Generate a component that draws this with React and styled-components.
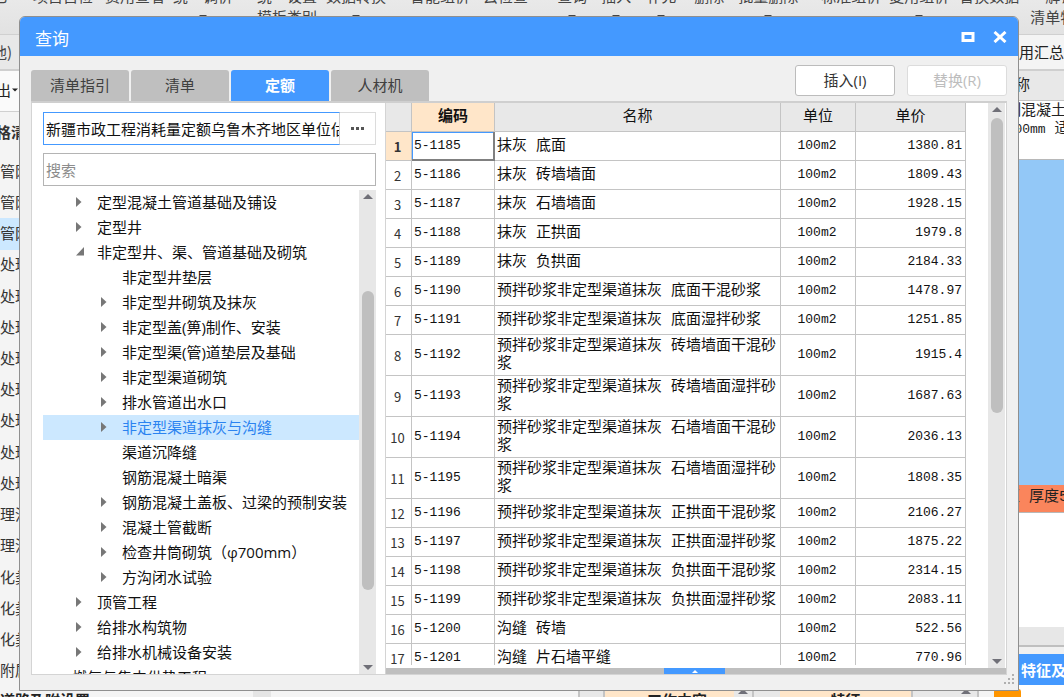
import React from "react";
import styled, { createGlobalStyle, css } from "styled-components";

const uiFont = '"Open Sans", "Noto Sans CJK SC", sans-serif';
const cjkFont = '"Noto Sans CJK SC", sans-serif';
const gridFont = '"Liberation Mono", "Noto Sans CJK SC", monospace';

const GlobalStyle = createGlobalStyle`
  * { box-sizing: border-box; }
  body { margin: 0; overflow: hidden; font-family: ${cjkFont}; font-size: 15px; color: #222; }
  button, input { font: inherit; }
`;

/* ---------- main window behind the dialog ---------- */

const Shell = styled.div`
  position: relative;
  height: 100vh;
  display: flex;
  flex-direction: column;
  overflow: hidden;
  background: #f4f4f4;
  white-space: nowrap;
`;

const Toolbar = styled.div`
  flex: 0 0 35px;
  display: flex;
  align-items: flex-end;
  padding-bottom: 7px;
  overflow: hidden;
  background: linear-gradient(#e9e9e9, #e2e2e2);
  border-bottom: 1px solid #d0d0d0;
  color: #444;
`;

const Tool = styled.button`
  flex: none;
  height: 42px;
  margin: 0 0 0 ${(p) => p.$gap}px;
  padding: 0;
  border: 0;
  background: none;
  color: inherit;
  display: grid;
  grid-template-rows: 21px 21px;
  place-items: center;
  line-height: 21px;
`;

const SubBar = styled.div`
  flex: 0 0 35px;
  display: flex;
  border-bottom: 2px solid #cfcfcf;
  background: #e8e8e8;
  line-height: 34px;
`;

const SubLeft = styled.div`
  flex: 1;
  text-indent: -8px;
  color: #444;
`;

const SubRight = styled.div`
  flex: 0 0 80px;
  padding-left: 20px;
  background: #f4f4f4;
  overflow: hidden;
`;

const Work = styled.div`
  flex: 1;
  min-height: 0;
  display: flex;
`;

const Side = styled.div`
  flex: 0 0 253px;
  display: flex;
  flex-direction: column;
  padding-bottom: 2px;
  background: #f4f4f4;
`;

const ExportBar = styled.div`
  flex: 0 0 41px;
  display: flex;
  align-items: center;
  gap: 1px;
  padding-bottom: 3px;
  background: #fafafa;
  border-bottom: 1px solid #d0d0d0;
  text-indent: -4px;
`;

const SideTitle = styled.div`
  flex: 0 0 44px;
  line-height: 40px;
  font-weight: bold;
  color: #333;
  text-indent: -4px;
`;

const SideItem = styled.div`
  flex: 1;
  display: flex;
  align-items: center;
  padding-bottom: 3px;
  color: #333;
  background: ${(p) => (p.$active ? "#cce8ff" : "transparent")};
`;

const Middle = styled.div`
  flex: 1;
  background: #f4f4f4;
`;

const Details = styled.div`
  flex: 0 0 80px;
  display: flex;
  flex-direction: column;
  overflow: hidden;
  background: #fff;
`;

const DetailHead = styled.div`
  flex: 0 0 30px;
  line-height: 26px;
  padding-left: 16px;
  background: #e8e8e8;
  border-bottom: 1px solid #c4c4c4;
`;

const DetailCell = styled.div`
  flex: 0 0 59px;
  padding: 2px 0 0 7px;
  line-height: 18px;
  font-family: ${gridFont};
  border-bottom: 1px solid #b8b8b8;
  small { font-size: 13px; }
`;

const BlueBlock = styled.div`
  flex: 1;
  background: #93c8f7;
`;

const OrangeBlock = styled.div`
  flex: 0 0 28px;
  line-height: 26px;
  padding-left: 6px;
  background: #fa855c;
  border-bottom: 1px solid #b8b8b8;
  font-family: ${gridFont};
`;

const Blank = styled.div`
  flex: 0 0 114px;
`;

const DetailScroll = styled.div`
  flex: 0 0 27px;
  background: linear-gradient(#e7e7e7 18px, #bfbfbf 18px, #bfbfbf 20px, #f0f0f0 20px);
`;

const DetailTab = styled.div`
  flex: 0 0 31px;
  line-height: 31px;
  padding-left: 37px;
  background: #4499ff;
  color: #fff;
  font-weight: bold;
`;

const DetailEnd = styled.div`
  flex: 0 0 4px;
`;

const BottomRow = styled.div`
  flex: 0 0 8px;
  display: flex;
  overflow: hidden;
  line-height: 22px;
  color: #222;
`;

const BottomCell = styled.div`
  flex: ${(p) => (p.$w ? `0 0 ${p.$w}px` : "1")};
  text-align: ${(p) => (p.$start ? "left" : "center")};
  background: ${(p) => p.$bg || "#f4f4f4"};
  border-right: ${(p) => (p.$line ? "2px solid #c4c4c4" : "0")};
  border-radius: ${(p) => (p.$round ? "3px 3px 0 0" : "0")};
  font-weight: bold;
  svg { display: block; margin: 0 auto; color: #707078; }
`;

/* ---------- dialog ---------- */

const Dialog = styled.section`
  position: absolute;
  inset: 16px 45px 6px 19px;
  display: flex;
  flex-direction: column;
  background: #f0f0f0;
  border: 1px solid #8f8f8f;
  border-radius: 6px 6px 0 0;
  overflow: hidden;
`;

const TitleBar = styled.header`
  flex: 0 0 39px;
  display: flex;
  align-items: center;
  padding: 0 11px 0 15px;
  background: #4499ff;
  color: #fff;
`;

const Title = styled.h1`
  flex: 1;
  margin: 0;
  padding-top: 2px;
  font-size: 17px;
  line-height: 24px;
  font-weight: normal;
`;

const WinButton = styled.button`
  display: flex;
  padding: 0;
  margin-left: 18px;
  border: 0;
  background: none;
  color: #fff;
`;

const Bar = styled.div`
  flex: 0 0 45px;
  display: flex;
  align-items: flex-end;
  padding: 0 11px;
`;

const Tabs = styled.div`
  flex: 1;
  display: flex;
  gap: 2px;
`;

const Tab = styled.button`
  width: 98px;
  height: 31px;
  padding: 0 0 2px;
  border: 0;
  border-radius: 3px 3px 0 0;
  background: ${(p) => (p.$active ? "#4499ff" : "#bfbfbf")};
  color: ${(p) => (p.$active ? "#fff" : "#404040")};
  font-weight: ${(p) => (p.$active ? "bold" : "normal")};
`;

const Actions = styled.div`
  display: flex;
  gap: 12px;
  padding-bottom: 5px;
`;

const Action = styled.button`
  width: 100px;
  height: 31px;
  padding: 0 0 2px;
  border: 1px solid #bcbcbc;
  border-radius: 3px;
  background: #fff;
  color: #333;
  font-family: ${uiFont};
  &:disabled { border-color: #dcdcdc; color: #bdbdbd; }
`;

const Panel = styled.div`
  flex: 1;
  min-height: 0;
  display: flex;
  margin: 0 11px 15px;
  border: 1px solid #d4d4d4;
  border-top: 2px solid #cfcfcf;
`;

const Left = styled.div`
  flex: 0 0 354px;
  display: flex;
  flex-direction: column;
  padding: 9px 9px 0 11px;
  background: #fff;
  border-right: 1px solid #d4d4d4;
`;

const Picker = styled.div`
  flex: 0 0 33px;
  display: flex;
  margin-bottom: 8px;
`;

const PickerInput = styled.input`
  flex: 1;
  min-width: 0;
  padding: 0 0 0 2px;
  border: 1px solid #4499ff;
  border-right-color: #d0d0d0;
  border-radius: 0;
  color: #111;
  outline: none;
`;

const PickerButton = styled.button`
  width: 36px;
  padding: 0;
  border: 1px solid #dcdcdc;
  border-left: 0;
  background: #fff;
  color: #555;
  display: grid;
  place-items: center;
`;

const Search = styled.input`
  flex: 0 0 33px;
  min-width: 0;
  margin-bottom: 4px;
  padding: 0 2px;
  border: 1px solid #b4b4b4;
  border-radius: 0;
  outline: none;
  &::placeholder { color: #8c8c8c; opacity: 1; }
`;

const TreeArea = styled.div`
  flex: 1;
  min-height: 0;
  display: flex;
`;

const Tree = styled.ul`
  flex: 1;
  margin: 0;
  padding: 0;
  list-style: none;
  overflow: hidden;
  font-family: ${uiFont};
`;

const Node = styled.li`
  display: flex;
  align-items: center;
  height: 25px;
  line-height: 22px;
  padding: 0 0 2px ${(p) => 8 + p.$level * 25}px;
  background: ${(p) => (p.$active ? "#cce8ff" : "transparent")};
  color: ${(p) => (p.$active ? "#2b83f0" : "#111")};
`;

const Twist = styled.span`
  flex: 0 0 21px;
  display: flex;
`;

const Track = styled.div`
  flex: 0 0 17px;
  display: flex;
  flex-direction: column;
  align-items: center;
  padding: 4px 0;
  background: #e7e7e7;
  color: #707078;
`;

const Spacer = styled.div`
  flex: ${(p) => p.$grow} 0 0;
`;

const Thumb = styled.div`
  flex: ${(p) => p.$grow} 0 0;
  width: 12px;
  border-radius: 6px;
  background: #bfbfbf;
`;

const Right = styled.div`
  flex: 1;
  min-width: 0;
  display: flex;
  flex-direction: column;
  background: #fff;
`;

const GridArea = styled.div`
  flex: 1;
  min-height: 0;
  display: flex;
  padding-right: 1px;
`;

const GridView = styled.div`
  flex: 1;
  min-width: 0;
  overflow: hidden;
  margin-bottom: 3px;
  padding-right: 22px;
`;

const Table = styled.table`
  width: 100%;
  table-layout: fixed;
  border-collapse: separate;
  border-spacing: 0;
  font-family: ${gridFont};
  color: #111;
`;

const cell = css`
  border-right: 1px solid #c4c4c4;
  border-bottom: 1px solid #c4c4c4;
`;

const Th = styled.th`
  ${cell}
  height: 29px;
  padding: 2px 0 0;
  line-height: 24px;
  background: ${(p) => (p.$active ? "#ffe6c9" : "#e8e8e8")};
  font-weight: ${(p) => (p.$active ? "bold" : "normal")};
`;

const RowNo = styled.th`
  ${cell}
  padding: 1px 2px 0 0;
  font-family: ${cjkFont};
  font-size: 13px;
  line-height: 18px;
  color: #333;
  background: ${(p) => (p.$active ? "#ffe6c9" : "#fff")};
  font-weight: ${(p) => (p.$active ? "bold" : "normal")};
`;

const Tr = styled.tr`
  height: ${(p) => (p.$tall ? 41 : 29)}px;
`;

const Td = styled.td`
  ${cell}
  padding: 0 2px;
  line-height: 18px;
  font-size: ${(p) => (p.$text ? 15 : 13)}px;
  text-align: ${(p) => p.$align || "left"};
  white-space: ${(p) => (p.$text ? "normal" : "nowrap")};
  word-break: break-all;
  ${(p) => p.$text && "padding-top: 2px; padding-right: 0;"}
  ${(p) => p.$align === "center" && "padding-right: 4px;"}
  ${(p) => p.$align === "right" && "padding-right: 3px;"}
  ${(p) =>
    p.$active &&
    css`
      border-right: 2px solid #808080;
      border-bottom: 2px solid #808080;
      box-shadow: inset 1px 1px 0 #4499ff;
    `}
`;

const Splitter = styled.div`
  flex: 0 0 6px;
  display: flex;
  background: #bfbfbf;
`;

const SplitHandle = styled.button`
  width: 61px;
  margin-left: 278px;
  padding: 0;
  border: 0;
  background: #4499ff;
  color: #fff;
  display: grid;
  place-items: center;
`;

const Grip = styled.svg`
  position: absolute;
  right: 3px;
  bottom: 5px;
`;

/* ---------- icons ---------- */

const Up = ({ w = 10, h = 5 }) => (
  <svg width={w} height={h} viewBox="0 0 10 5" fill="currentColor"><path d="M0 5 5 0l5 5z" /></svg>
);
const Down = ({ w = 10, h = 5 }) => (
  <svg width={w} height={h} viewBox="0 0 10 5" fill="currentColor"><path d="M0 0h10L5 5z" /></svg>
);
const Closed = () => (
  <svg width="6" height="10" viewBox="0 0 6 10" fill="#777"><path d="M0 0 5.500 5 0 10z" /></svg>
);
const Open = () => (
  <svg width="8" height="9" viewBox="0 0 8 9" fill="#777"><path d="M8 0v8.500H0z" /></svg>
);

/* ---------- data ---------- */

const tools = [
  ["其它", -22], ["项目自检", 25], ["费用查看", 12], ["统一调价", 8, true], ["统一设置", 24, false, "模板类别"],
  ["数据转换", 9, true], ["智能组价", 24], ["云检查", 13], ["查询", 29, true], ["插入", 14, true], ["补充", 15, true],
  ["删除", 18], ["批量删除", 14, true], ["标准组价", 23], ["复用组价", 8, true], ["替换数据", 10], ["解锁", 11, false, "清单特征"],
];

const sideItems = ["管网", "管网", "管网", "处理", "处理", "处理", "处理", "处理", "处理", "处理", "处理", "理池", "理池", "化粪", "化粪", "化粪", "附属"];

const nodes = [
  [1, "c", "定型混凝土管道基础及铺设"],
  [1, "c", "定型井"],
  [1, "o", "非定型井、渠、管道基础及砌筑"],
  [2, "", "非定型井垫层"],
  [2, "c", "非定型井砌筑及抹灰"],
  [2, "c", "非定型盖(箅)制作、安装"],
  [2, "c", "非定型渠(管)道垫层及基础"],
  [2, "c", "非定型渠道砌筑"],
  [2, "c", "排水管道出水口"],
  [2, "c", "非定型渠道抹灰与沟缝", true],
  [2, "", "渠道沉降缝"],
  [2, "", "钢筋混凝土暗渠"],
  [2, "c", "钢筋混凝土盖板、过梁的预制安装"],
  [2, "c", "混凝土管截断"],
  [2, "c", "检查井筒砌筑（φ700mm）"],
  [2, "c", "方沟闭水试验"],
  [1, "c", "顶管工程"],
  [1, "c", "给排水构筑物"],
  [1, "c", "给排水机械设备安装"],
  [0, "", "燃气与集中供热工程"],
];

const rows = [
  ["5-1185", "抹灰 底面", "1380.81"],
  ["5-1186", "抹灰 砖墙墙面", "1809.43"],
  ["5-1187", "抹灰 石墙墙面", "1928.15"],
  ["5-1188", "抹灰 正拱面", "1979.8"],
  ["5-1189", "抹灰 负拱面", "2184.33"],
  ["5-1190", "预拌砂浆非定型渠道抹灰 底面干混砂浆", "1478.97"],
  ["5-1191", "预拌砂浆非定型渠道抹灰 底面湿拌砂浆", "1251.85"],
  ["5-1192", "预拌砂浆非定型渠道抹灰 砖墙墙面干混砂浆", "1915.4", true],
  ["5-1193", "预拌砂浆非定型渠道抹灰 砖墙墙面湿拌砂浆", "1687.63", true],
  ["5-1194", "预拌砂浆非定型渠道抹灰 石墙墙面干混砂浆", "2036.13", true],
  ["5-1195", "预拌砂浆非定型渠道抹灰 石墙墙面湿拌砂浆", "1808.35", true],
  ["5-1196", "预拌砂浆非定型渠道抹灰 正拱面干混砂浆", "2106.27"],
  ["5-1197", "预拌砂浆非定型渠道抹灰 正拱面湿拌砂浆", "1875.22"],
  ["5-1198", "预拌砂浆非定型渠道抹灰 负拱面干混砂浆", "2314.15"],
  ["5-1199", "预拌砂浆非定型渠道抹灰 负拱面湿拌砂浆", "2083.11"],
  ["5-1200", "沟缝 砖墙", "522.56"],
  ["5-1201", "沟缝 片石墙平缝", "770.96"],
];

export default function App() {
  return (
    <>
      <GlobalStyle />
      <Shell>
        <Toolbar>
          {tools.map(([name, gap, menu, second]) => (
            <Tool key={name} $gap={gap}>
              <span>{name}</span>
              {menu ? <Down w={8} h={6} /> : <span>{second}</span>}
            </Tool>
          ))}
        </Toolbar>
        <SubBar>
          <SubLeft>他)</SubLeft>
          <SubRight>费用汇总</SubRight>
        </SubBar>
        <Work>
          <Side>
            <ExportBar>出<Down w={6} h={4} /></ExportBar>
            <SideTitle>格清单</SideTitle>
            {sideItems.map((s, i) => (
              <SideItem key={i} $active={i === 2}>{s}</SideItem>
            ))}
          </Side>
          <Middle />
          <Details>
            <DetailHead>名称</DetailHead>
            <DetailCell>预制混凝土<br /><small>DN700mm</small> 适用</DetailCell>
            <BlueBlock />
            <OrangeBlock>砂浆 厚度50</OrangeBlock>
            <Blank />
            <DetailScroll />
            <DetailTab>特征及内容</DetailTab>
            <DetailEnd />
          </Details>
        </Work>
        <BottomRow>
          <BottomCell $w={253} $start>道路及附设置</BottomCell>
          <BottomCell $w={18} $bg="#e5e5e5" />
          <BottomCell $line />
          <BottomCell $w={25} $bg="#e8e8e8" $line />
          <BottomCell $w={129} $bg="#ffe6c9">　工作内容</BottomCell>
          <BottomCell $w={20} $bg="#e8e8e8" $line><Up /></BottomCell>
          <BottomCell $w={26} $bg="#e8e8e8" />
          <BottomCell $w={133} $bg="#ffe6c9" $line>特征</BottomCell>
          <BottomCell $w={42} $bg="#e8e8e8" />
          <BottomCell $w={24} $bg="#e8e8e8" $line><Up /></BottomCell>
          <BottomCell $w={15} />
          <BottomCell $w={27} $bg="#ff9500" $round />
          <BottomCell $w={43} $bg="#fff" />
        </BottomRow>

        <Dialog role="dialog" aria-labelledby="dialog-title">
          <TitleBar>
            <Title id="dialog-title">查询</Title>
            <WinButton aria-label="最大化">
              <svg width="14" height="12" viewBox="0 0 14 12" fill="none" stroke="currentColor" strokeWidth="3"><path d="M2 2.500h10v7H2z" /></svg>
            </WinButton>
            <WinButton aria-label="关闭">
              <svg width="14" height="12" viewBox="0 0 14 12" fill="none" stroke="currentColor" strokeWidth="3"><path d="M1.500 1l11 10M12.500 1l-11 10" /></svg>
            </WinButton>
          </TitleBar>
          <Bar>
            <Tabs>
              {["清单指引", "清单", "定额", "人材机"].map((t) => (
                <Tab key={t} $active={t === "定额"}>{t}</Tab>
              ))}
            </Tabs>
            <Actions>
              <Action>插入(I)</Action>
              <Action disabled>替换(R)</Action>
            </Actions>
          </Bar>
          <Panel>
            <Left>
              <Picker>
                <PickerInput aria-label="定额库" defaultValue="新疆市政工程消耗量定额乌鲁木齐地区单位估价表" />
                <PickerButton aria-label="选择定额库">
                  <svg width="13" height="3" viewBox="0 0 13 3" fill="currentColor"><path d="M0 0h3v3H0zM5 0h3v3H5zM10 0h3v3h-3z" /></svg>
                </PickerButton>
              </Picker>
              <Search aria-label="搜索" placeholder="搜索" />
              <TreeArea>
                <Tree>
                  {nodes.map(([level, state, text, active]) => (
                    <Node key={text} $level={level} $active={active}>
                      <Twist>{state === "c" ? <Closed /> : state === "o" ? <Open /> : null}</Twist>
                      {text}
                    </Node>
                  ))}
                </Tree>
                <Track>
                  <Up />
                  <Spacer $grow={92} />
                  <Thumb $grow={297} />
                  <Spacer $grow={75} />
                  <Down />
                </Track>
              </TreeArea>
            </Left>
            <Right>
              <GridArea>
                <GridView>
                  <Table>
                    <colgroup>
                      <col style={{ width: 26 }} />
                      <col style={{ width: 83 }} />
                      <col />
                      <col style={{ width: 75 }} />
                      <col style={{ width: 110 }} />
                    </colgroup>
                    <thead>
                      <tr>
                        <Th />
                        <Th $active>编码</Th>
                        <Th>名称</Th>
                        <Th>单位</Th>
                        <Th>单价</Th>
                      </tr>
                    </thead>
                    <tbody>
                      {rows.map(([code, name, price, tall], i) => (
                        <Tr key={code} $tall={tall}>
                          <RowNo $active={i === 0}>{i + 1}</RowNo>
                          <Td $active={i === 0}>{code}</Td>
                          <Td $text>{name}</Td>
                          <Td $align="center">100m2</Td>
                          <Td $align="right">{price}</Td>
                        </Tr>
                      ))}
                    </tbody>
                  </Table>
                </GridView>
                <Track>
                  <Up />
                  <Spacer $grow={6} />
                  <Thumb $grow={293} />
                  <Spacer $grow={244} />
                  <Down />
                </Track>
              </GridArea>
              <Splitter>
                <SplitHandle aria-label="展开"><Up w={6} h={3} /></SplitHandle>
              </Splitter>
            </Right>
          </Panel>
          <Grip width="11" height="11" viewBox="0 0 11 11" fill="#b0b0b0">
            <path d="M8 0h2v2H8zM4 4h2v2H4zM8 4h2v2H8zM0 8h2v2H0zM4 8h2v2H4zM8 8h2v2H8z" />
          </Grip>
        </Dialog>
      </Shell>
    </>
  );
}
